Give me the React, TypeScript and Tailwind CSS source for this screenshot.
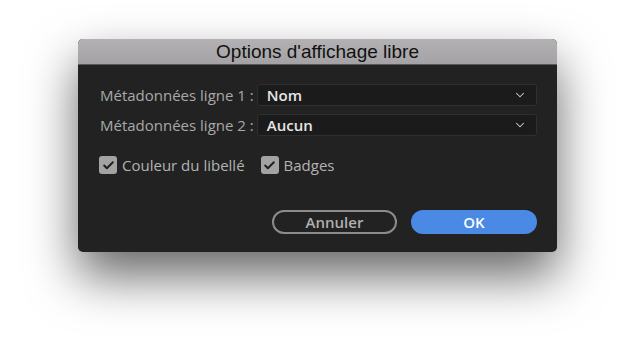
import { ChevronDown, Check } from "lucide-react";

const font = { fontFamily: '"Open Sans", "Noto Sans", sans-serif' };

function SelectRow({ label, value }: { label: string; value: string }) {
  return (
    <>
      <span className="text-[15px] text-[#a9a9a9] leading-[22px] whitespace-nowrap">{label}</span>
      <div className="h-[22px] flex items-center justify-between rounded-[3px] border border-[#2f2f2f] bg-[#1b1b1b] pl-[9px] pr-[9px]">
        <span className="text-[15px] font-semibold text-[#e6e6e6]">{value}</span>
        <ChevronDown className="w-[14px] h-[14px] text-[#d0d0d0]" strokeWidth={1.75} />
      </div>
    </>
  );
}

function CheckItem({ label }: { label: string }) {
  return (
    <div className="flex items-center gap-[5px]">
      <div className="w-[18px] h-[18px] rounded-[3px] bg-[#a3a3a3] flex items-center justify-center">
        <Check className="w-[13px] h-[13px] text-[#1e1e1e]" strokeWidth={3.5} />
      </div>
      <span className="text-[15px] leading-[20px] text-[#b3b3b3]">{label}</span>
    </div>
  );
}

export default function App() {
  return (
    <div className="w-[636px] h-[350px] bg-white pt-[39px] pl-[78px]" style={font}>
      <div className="w-[479px] h-[213px] rounded-[5px] overflow-hidden bg-[#222222] shadow-[0_24px_50px_rgba(0,0,0,0.6)] flex flex-col">
        <div className="h-[26px] shrink-0 bg-gradient-to-b from-[#b3b1b3] to-[#a4a2a4] border-b border-[#5a5a5a] flex items-center justify-center">
          <span className="text-[19px] text-[#111] leading-none" style={{ fontFamily: '"Liberation Sans", Arial, sans-serif' }}>
            Options d'affichage libre
          </span>
        </div>
        <div className="flex-1 flex flex-col pl-[22px] pr-[20px] pt-[19px]">
          <div className="grid grid-cols-[auto_1fr] gap-x-[3px] gap-y-[8px] items-center">
            <SelectRow label="Métadonnées ligne 1 :" value="Nom" />
            <SelectRow label="Métadonnées ligne 2 :" value="Aucun" />
          </div>
          <div className="flex items-center gap-[16px] mt-[19px] -ml-[1px]">
            <CheckItem label="Couleur du libellé" />
            <CheckItem label="Badges" />
          </div>
          <div className="flex justify-end gap-[14px] mt-[35px]">
            <button className="w-[125px] h-[24px] rounded-full border-2 border-[#8c8c8c] text-[15px] font-semibold text-[#b0b0b0] flex items-center justify-center">
              Annuler
            </button>
            <button className="w-[126px] h-[24px] rounded-full bg-[#4a8ae4] text-[15px] font-semibold text-white flex items-center justify-center">
              OK
            </button>
          </div>
        </div>
      </div>
    </div>
  );
}
